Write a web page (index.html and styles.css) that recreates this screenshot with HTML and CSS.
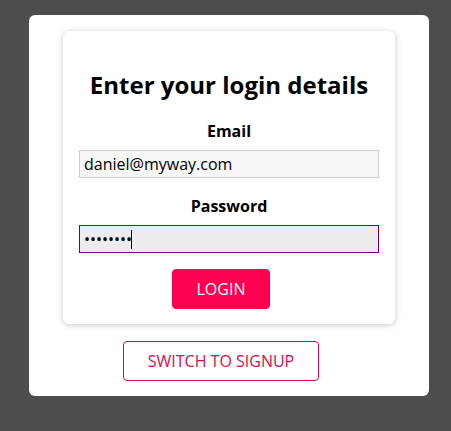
FILE: index.html
```html
<!DOCTYPE html>
<html lang="en">
<head>
    <meta charset="UTF-8">
    <meta name="viewport" content="width=device-width, initial-scale=1.0">
    <title>Login</title>
    <link rel="stylesheet" href="styles.css">
</head>
<body>
    <div class="auth">
        <form class="login-card">
            <h1>Enter your login details</h1>
            <div class="control">
                <label for="email">Email</label>
                <input type="email" id="email" value="daniel@myway.com">
            </div>
            <div class="control">
                <label for="password">Password</label>
                <div class="field">
                    <input type="password" id="password" class="active" value="12345678">
                    <span class="caret"></span>
                </div>
            </div>
            <div class="actions">
                <button type="button" class="login-btn">LOGIN</button>
            </div>
        </form>
        <button type="button" class="switch-btn">SWITCH TO SIGNUP</button>
    </div>
</body>
</html>
```

FILE: styles.css
```css
*{
    box-sizing: border-box;
}
body{
    margin: 0;
    background-color: #4d4d4d;
    font-family: "Open Sans", "Noto Sans", sans-serif;
    height: 431px;
    padding: 15px 0 0 29px;
}
.auth{
    width: 400px;
    background-color: #fff;
    border-radius: 6px;
    padding: 16px 34px 15px;
    display: flex;
    flex-direction: column;
    align-items: center;
}
.login-card{
    width: 332px;
    background-color: #fff;
    border-radius: 6px;
    box-shadow: 0 1px 6px rgba(0, 0, 0, 0.22);
    padding: 38px 16px 15px;
    display: flex;
    flex-direction: column;
    align-items: center;
}
h1{
    margin: 0;
    font-size: 24px;
    line-height: 32px;
    font-weight: 700;
    color: #000;
}
.control{
    width: 100%;
    display: flex;
    flex-direction: column;
    align-items: center;
    margin-top: 19px;
}
.control + .control{
    margin-top: 17px;
}
label{
    font-size: 16px;
    line-height: 22px;
    font-weight: 700;
    margin-bottom: 8px;
}
.field{
    position: relative;
}
input{
    display: block;
    width: 300px;
    height: 28px;
    font-family: inherit;
    font-size: 16px;
    padding: 0 4px;
    border: 1px solid #ccc;
    background-color: #f7f7f7;
    color: #000;
    outline: none;
}
input.active{
    border-color: #6b006b;
    background-color: #ececec;
}
.caret{
    position: absolute;
    left: 52px;
    top: 5px;
    width: 1px;
    height: 19px;
    background-color: #000;
}
.actions{
    margin: 16px 16px 0 0;
}
.login-btn{
    width: 98px;
    height: 40px;
    font-family: inherit;
    font-size: 16px;
    color: #fff;
    background-color: #ff0050;
    border: 1px solid #ff0050;
    border-radius: 4px;
}
.switch-btn{
    margin: 17px 16px 0 0;
    width: 196px;
    height: 40px;
    font-family: inherit;
    font-size: 16px;
    color: #dc0a50;
    background-color: #fff;
    border: 1px solid #dc0a50;
    border-radius: 4px;
}
```
